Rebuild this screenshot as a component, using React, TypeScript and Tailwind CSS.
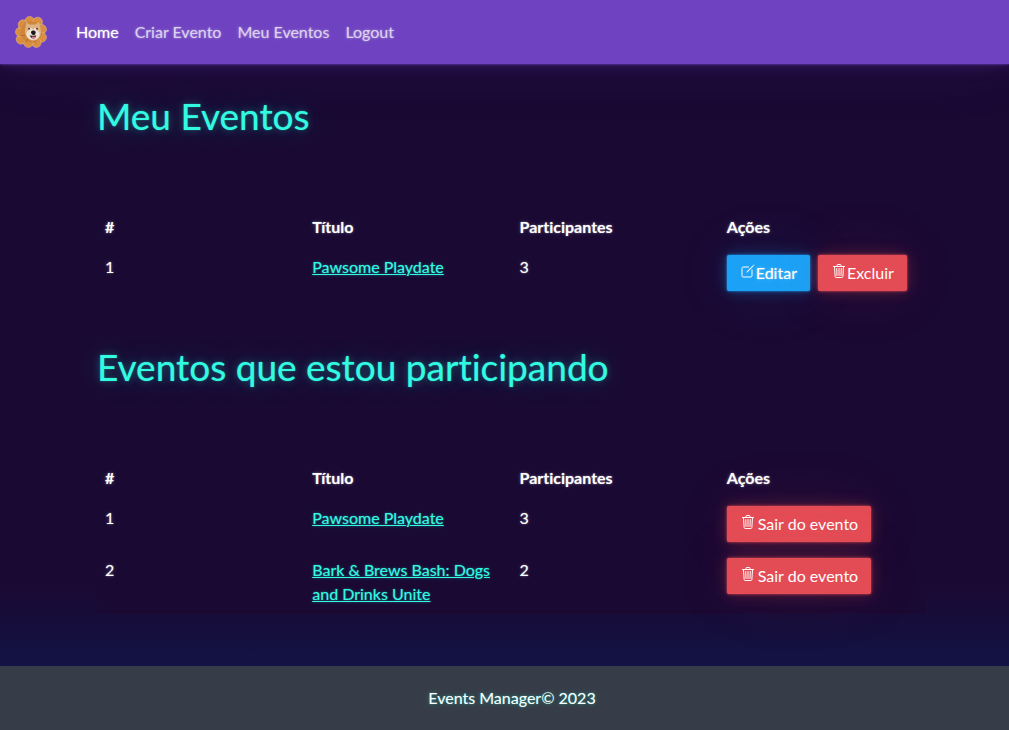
import type { ReactNode } from "react";
import { IoCreateOutline, IoTrashOutline } from "react-icons/io5";

type EventItem = { id: number; title: string; participants: number };

const ownedEvents: EventItem[] = [{ id: 1, title: "Pawsome Playdate", participants: 3 }];

const joinedEvents: EventItem[] = [
  { id: 1, title: "Pawsome Playdate", participants: 3 },
  { id: 2, title: "Bark & Brews Bash: Dogs and Drinks Unite", participants: 2 },
];

const dangerButton =
  "inline-flex h-9 items-center rounded-[2px] bg-[#e44c55] px-[13px] text-white cursor-pointer shadow-[0_0_2px_rgba(228,76,85,0.9),0_0_4px_rgba(228,76,85,0.4),0_0_16px_rgba(228,76,85,0.3),0_0_64px_rgba(228,76,85,0.1)]";
const infoButton =
  "inline-flex h-9 items-center rounded-[2px] bg-[#1ba2f6] px-[13px] text-white cursor-pointer shadow-[0_0_2px_rgba(27,162,246,0.9),0_0_4px_rgba(27,162,246,0.4),0_0_16px_rgba(27,162,246,0.3),0_0_64px_rgba(27,162,246,0.1)]";

function Logo() {
  return (
    <svg viewBox="0 0 48 48" className="size-8" aria-hidden="true">
      <g fill="#d98f3f" stroke="#e6bd92" strokeWidth="0.8">
        <circle cx="22" cy="8" r="7.2" />
        <circle cx="34" cy="9" r="7.2" />
        <circle cx="40" cy="20" r="7.2" />
        <circle cx="40" cy="32" r="7.2" />
        <circle cx="32" cy="40" r="7.2" />
        <circle cx="20" cy="40" r="7.2" />
        <circle cx="9" cy="35" r="7.2" />
        <circle cx="8" cy="24" r="7.2" />
        <circle cx="12" cy="13" r="7.2" />
      </g>
      <circle cx="24" cy="24" r="16" fill="#cf8638" />
      <path d="M8 29q4 1 7 0M15 40q3-2 4-6M31 40q-3-3-2-6M40 27q-4 1-6-1M36 13q-3 1-5 4M15 11q2 2 5 2" fill="none" stroke="#a9672c" strokeWidth="1.2" />
      <path d="M15 21l2-12 5 4h8l6-4 3 12c1 8-3 15-11 16-8 0-14-8-13-16z" fill="#dcb284" />
      <path d="M17 27c0-5 5-5 6-9h8c1 5 6 4 6 9 0 5-5 9-10 9s-10-4-10-9z" fill="#eee0d3" />
      <path d="M23 13h7l-1 7h-4z" fill="#dfb588" />
      <circle cx="21" cy="19" r="1.3" fill="#3d2820" />
      <circle cx="33" cy="19" r="1.3" fill="#3d2820" />
      <path d="M24 24c1-3 6-3 7 0 0 3-1 4-3 5-2-1-4-2-4-5z" fill="#1b181d" />
      <path d="M22 29c2 1 8 1 10 0-1 4-3 5-5 5s-4-2-5-5z" fill="#40292c" />
      <path d="M25 31h5c0 3-1 4-2 4s-3-1-3-4z" fill="#d87f88" />
    </svg>
  );
}

function EventTable({ label, events, actions }: { label: string; events: EventItem[]; actions: () => ReactNode }) {
  return (
    <table aria-label={label} className="mt-[67px] w-full table-fixed border-collapse bg-[#1a0933] text-left">
      <thead>
        <tr>
          {["#", "Título", "Participantes", "Ações"].map((heading) => (
            <th key={heading} scope="col" className="p-2 font-bold">
              {heading}
            </th>
          ))}
        </tr>
      </thead>
      <tbody>
        {events.map((event) => (
          <tr key={event.id} className="align-top">
            <td className="p-2">{event.id}</td>
            <td className="p-2">
              <a
                href="#evento"
                className="text-[#32fbe2] underline [text-shadow:0_0_1px_rgba(50,251,226,0.3),0_0_2px_rgba(50,251,226,0.3),0_0_5px_rgba(50,251,226,0.2)]"
              >
                {event.title}
              </a>
            </td>
            <td className="p-2">{event.participants}</td>
            <td className="p-2">
              <div className="flex gap-2">{actions()}</div>
            </td>
          </tr>
        ))}
      </tbody>
    </table>
  );
}

function Title({ children }: { children: ReactNode }) {
  return (
    <h1 className="text-[37px] leading-12 text-[#32fbe2] [text-shadow:0_0_1px_rgba(50,251,226,0.3),0_0_2px_rgba(50,251,226,0.3),0_0_8px_rgba(50,251,226,0.3),0_0_32px_rgba(50,251,226,0.3)]">
      {children}
    </h1>
  );
}

export default function App() {
  return (
    <div className="flex min-h-screen flex-col overflow-hidden bg-[#1a0933] bg-[linear-gradient(#1a0933_80%,#111547_93%)] font-['Lato',sans-serif] text-base text-white [font-variant-ligatures:none] [text-shadow:0_0_1px_rgba(255,255,255,0.3),0_0_2px_rgba(255,255,255,0.3),0_0_5px_rgba(255,255,255,0.2)]">
      <nav className="flex h-16 items-center bg-[#6f42c1] px-[15px] shadow-[0_0_2px_rgba(111,66,193,0.9),0_0_4px_rgba(111,66,193,0.4),0_0_16px_rgba(111,66,193,0.3),0_0_64px_rgba(111,66,193,0.1)]">
        <a href="#inicio" aria-label="Events Manager">
          <Logo />
        </a>
        <ul className="ml-[29px] flex gap-4 text-white/60">
          <li>
            <a href="#home" className="text-white">Home</a>
          </li>
          <li>
            <a href="#criar">Criar Evento</a>
          </li>
          <li>
            <a href="#eventos">Meu Eventos</a>
          </li>
          <li>
            <a href="#logout">Logout</a>
          </li>
        </ul>
      </nav>

      <main className="flex-1 pt-7 pr-[83px] pb-[52px] pl-[97px]">
        <section>
          <Title>Meu Eventos</Title>
          <EventTable
            label="Meu Eventos"
            events={ownedEvents}
            actions={() => (
              <>
                <a href="#editar" className={infoButton}>
                  <IoCreateOutline className="mb-1 size-4" />
                  Editar
                </a>
                <button type="button" className={dangerButton}>
                  <IoTrashOutline className="mb-1 size-4" />
                  Excluir
                </button>
              </>
            )}
          />
        </section>
        <section className="mt-11">
          <Title>Eventos que estou participando</Title>
          <EventTable
            label="Eventos que estou participando"
            events={joinedEvents}
            actions={() => (
              <button type="button" className={dangerButton}>
                <IoTrashOutline className="mr-0.5 mb-1 size-4" />
                Sair do evento
              </button>
            )}
          />
        </section>
      </main>

      <footer className="flex h-16 items-center justify-center bg-[#373d48] pl-[15px] [text-shadow:0_0_1px_rgba(50,251,226,0.3),0_0_2px_rgba(50,251,226,0.3),0_0_5px_rgba(50,251,226,0.3)]">
        <p>Events Manager© 2023</p>
      </footer>
    </div>
  );
}
